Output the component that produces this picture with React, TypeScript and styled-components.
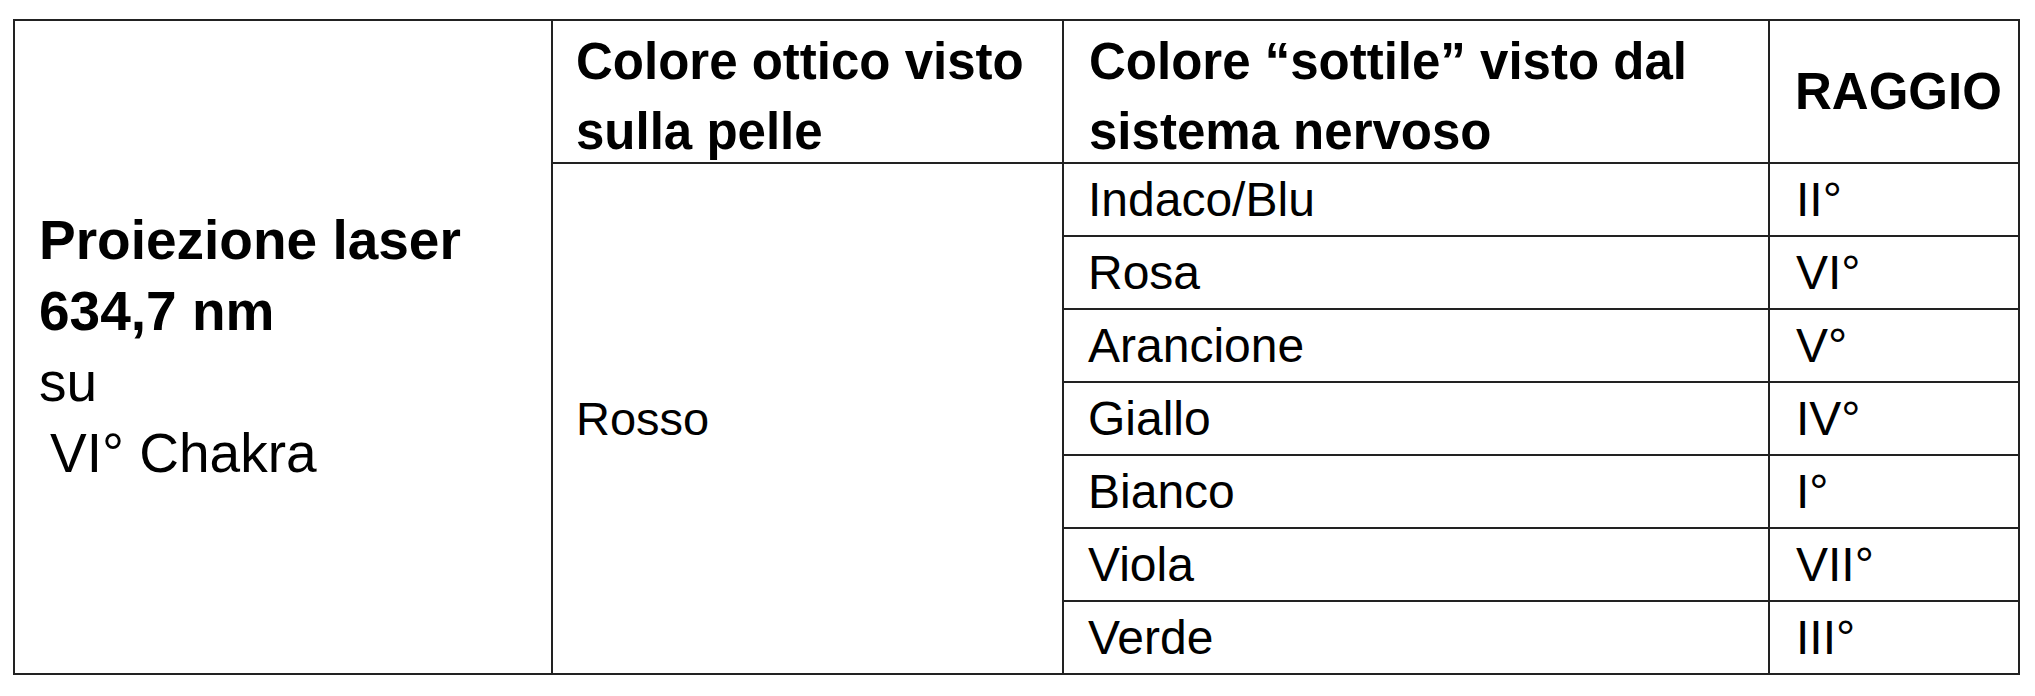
import React from "react";
import styled, { createGlobalStyle } from "styled-components";

const GlobalStyle = createGlobalStyle`
  html, body {
    margin: 0;
    padding: 0;
    background: #ffffff;
  }
  body {
    font-family: "Liberation Sans", Arial, sans-serif;
    color: #000000;
  }
`;

const Page = styled.div`
  padding: 19px 0 0 13px;
`;

const Table = styled.div`
  display: grid;
  grid-template-columns: 536px 509px 704px 248px;
  grid-template-rows: 141px repeat(7, 71px);
  gap: 2px;
  padding: 2px;
  width: max-content;
  background: #222222;
`;

const LeadCell = styled.div`
  grid-column: 1;
  grid-row: 1 / span 8;
  background: #ffffff;
  display: flex;
  flex-direction: column;
  justify-content: center;
  padding: 0 24px;
  font-size: 55px;
  line-height: 71px;
`;

const LeadLine = styled.div<{ $bold?: boolean }>`
  font-weight: ${(p) => (p.$bold ? 700 : 400)};
  white-space: pre;
`;

const HeadCell = styled.div<{ $center?: boolean; $pad: number }>`
  background: #ffffff;
  font-size: 51px;
  font-weight: 700;
  line-height: 70px;
  padding: ${(p) => (p.$center ? "0" : "6px")} 12px 0 ${(p) => p.$pad}px;
  display: flex;
  align-items: ${(p) => (p.$center ? "center" : "flex-start")};
`;

const SpanCell = styled.div`
  grid-column: 2;
  grid-row: 2 / span 7;
  background: #ffffff;
  display: flex;
  align-items: center;
  padding-left: 23px;
  font-size: 47px;
`;

const Cell = styled.div<{ $pad: number }>`
  background: #ffffff;
  display: flex;
  align-items: center;
  padding-left: ${(p) => p.$pad}px;
  font-size: 48px;
  line-height: 1;
`;

const rows: [string, string][] = [
  ["Indaco/Blu", "II°"],
  ["Rosa", "VI°"],
  ["Arancione", "V°"],
  ["Giallo", "IV°"],
  ["Bianco", "I°"],
  ["Viola", "VII°"],
  ["Verde", "III°"],
];

export default function App() {
  return (
    <>
      <GlobalStyle />
      <Page>
        <Table>
          <LeadCell>
            <LeadLine $bold>Proiezione laser</LeadLine>
            <LeadLine $bold>634,7 nm</LeadLine>
            <LeadLine>su</LeadLine>
            <LeadLine>{"\u2009VI° Chakra"}</LeadLine>
          </LeadCell>
          <HeadCell $pad={23}>
            <span>
              Colore ottico visto
              <br />
              sulla pelle
            </span>
          </HeadCell>
          <HeadCell $pad={25}>
            <span>
              Colore “sottile” visto dal
              <br />
              sistema nervoso
            </span>
          </HeadCell>
          <HeadCell $pad={25} $center>
            RAGGIO
          </HeadCell>
          <SpanCell>Rosso</SpanCell>
          {rows.map(([colour, ray]) => (
            <React.Fragment key={colour}>
              <Cell $pad={24}>{colour}</Cell>
              <Cell $pad={26}>{ray}</Cell>
            </React.Fragment>
          ))}
        </Table>
      </Page>
    </>
  );
}
